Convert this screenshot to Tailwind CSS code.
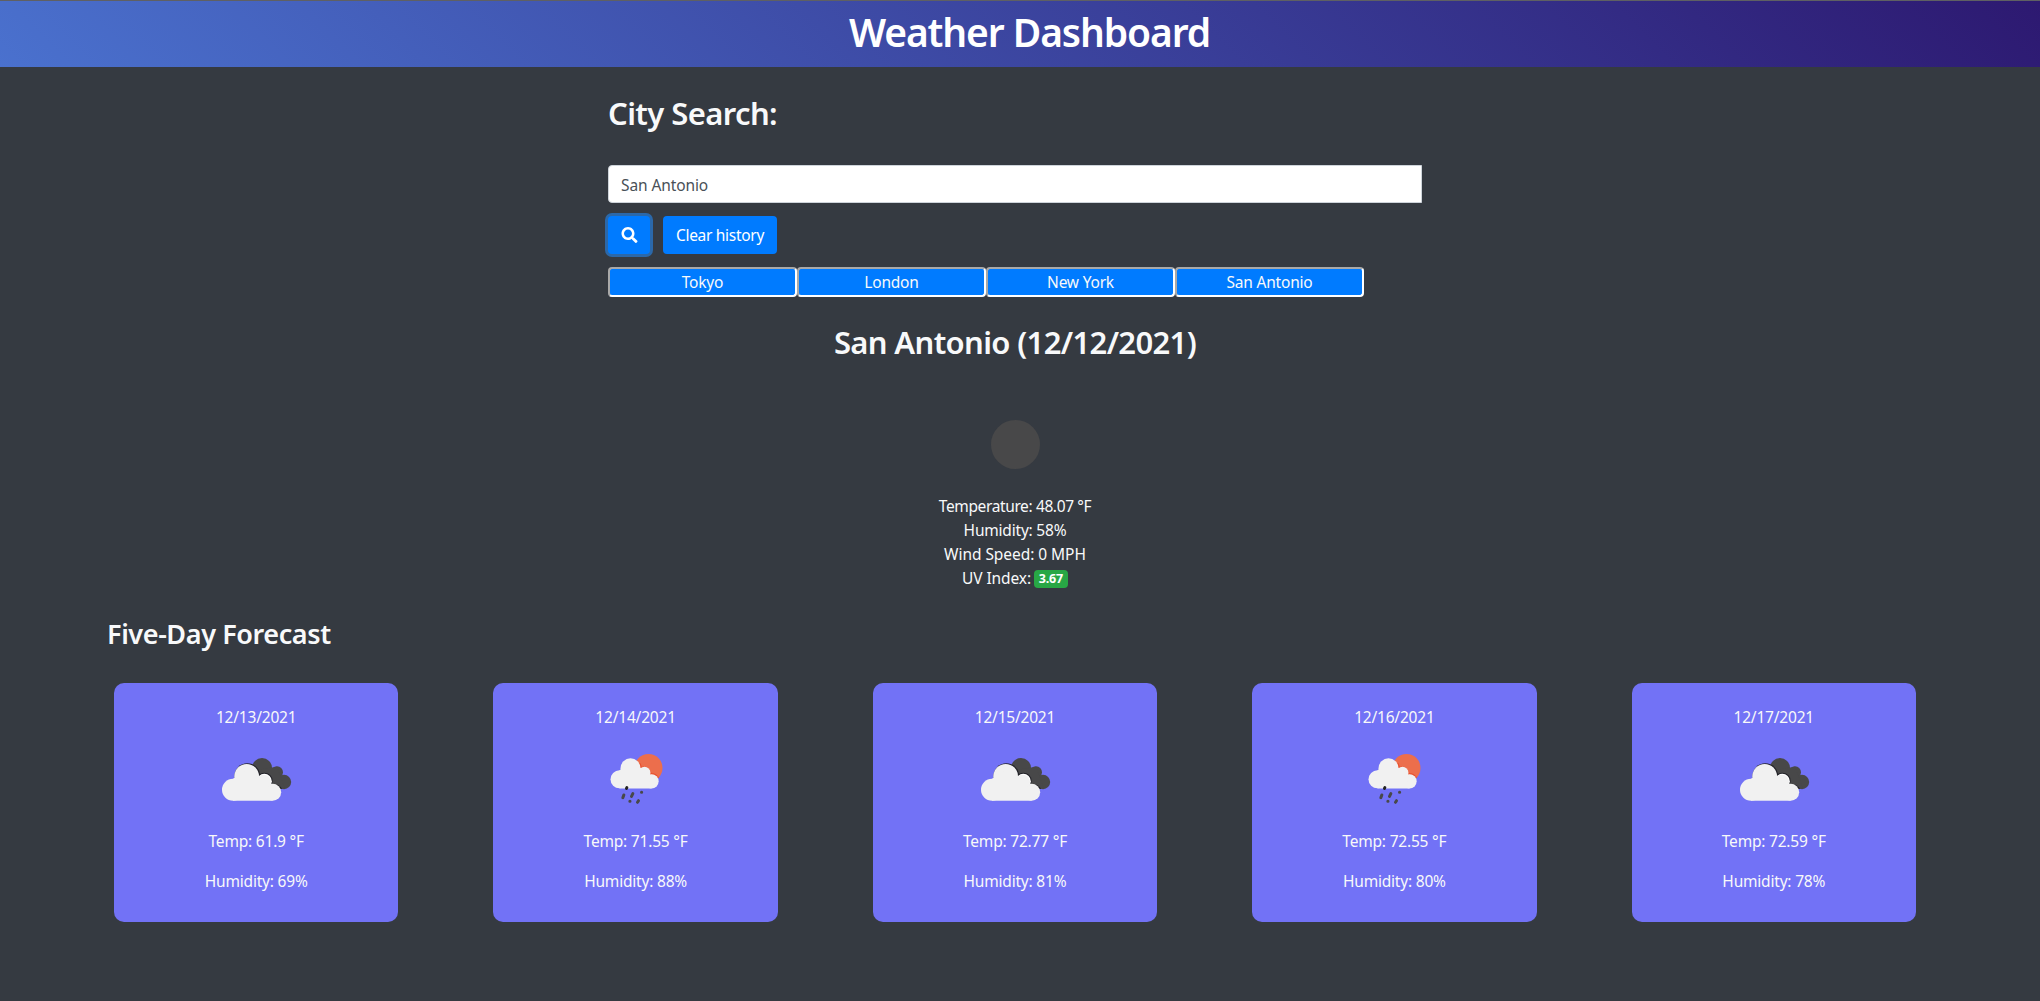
<!DOCTYPE html>
<html lang="en">
<head>
<meta charset="utf-8">
<title>Weather Dashboard</title>
<script src="https://cdn.jsdelivr.net/npm/@tailwindcss/browser@4"></script>
</head>
<body class="bg-[#353a41] text-[#f8f9fa] text-[15.5px] leading-6 min-h-[1001px] overflow-hidden font-['Noto_Sans',sans-serif]">
<svg class="hidden">
  <symbol id="clouds" viewBox="3 0 330 240">
    <g fill="#484849"><circle cx="186" cy="84" r="30"/><circle cx="231" cy="97" r="18"/><circle cx="252" cy="126" r="21.500"/><path d="M170 90L231 80L255 146H235L180 130Z"/></g>
    <g fill="#222228"><circle cx="142" cy="108" r="38.500"/><circle cx="193" cy="123" r="25"/><path d="M200 132H222Q240 134 246 147H210Z"/></g>
    <g fill="#fff"><circle cx="193" cy="124" r="22.500"/></g>
    <g fill="#f1f1f1"><circle cx="140" cy="109" r="37"/><circle cx="99" cy="149" r="33"/><circle cx="218" cy="157" r="25.500"/><circle cx="191" cy="126" r="22"/><path d="M99 116L140 90L200 120L218 182.500H99Z"/></g>
  </symbol>
  <symbol id="rain" viewBox="-28.500 0 330 240">
    <circle cx="174" cy="84" r="42" fill="#ec6e4c"/>
    <path d="M148 70Q152 78 151 83Q172 76 182 101Q195 101 204 113" fill="none" stroke="#e8502e" stroke-width="4"/>
    <g fill="#f1f1f1"><circle cx="120" cy="85" r="30"/><circle cx="87" cy="118" r="27"/><circle cx="183" cy="124" r="21.500"/><circle cx="162" cy="98" r="18"/><path d="M87 91L120 70L168 92L183 145.500H87Z"/></g>
    <g stroke="#484849" stroke-width="9" stroke-linecap="round"><path d="M100 165L97 173M127 161L123 169M153 157L153.500 157M118 184L118.500 184M144 182L141 187"/><path stroke="#222" d="M109 143L108 145"/></g>
  </symbol>
</svg>
<header class="h-[67px] border-t border-[#5f6063] bg-[linear-gradient(45deg,#4a71ce,#2d1971)] flex justify-center pt-[7px] pl-[19px]">
  <h1 class="text-[39px] leading-[48px] font-[560] text-white tracking-[-1.1px] whitespace-nowrap">Weather Dashboard</h1>
</header>
<main>
  <section class="w-[814px] ml-[608px]">
    <h2 class="text-[31px] leading-[38px] font-[560] pt-[27px] tracking-[-0.6px]">City Search:</h2>
    <input value="San Antonio" class="mt-[33px] block w-full h-[38px] rounded-l bg-white border border-[#ced4da] px-3 pt-0.5 text-[#495057] tracking-[-0.1px]">
    <div class="flex gap-[13px] mt-[13px]">
      <button aria-label="Search" class="w-[42px] h-[38px] rounded bg-[#007bff] ring-3 ring-[#2b68a9] flex items-center justify-center">
        <svg class="w-[17px] h-4" viewBox="0 0 512 512" fill="#fff"><path d="M505 442.700L405.300 343c-4.500-4.500-10.600-7-17-7H372c27.600-35.300 44-79.700 44-128C416 93.100 322.900 0 208 0S0 93.100 0 208s93.100 208 208 208c48.300 0 92.700-16.400 128-44v16.300c0 6.400 2.500 12.500 7 17l99.700 99.700c9.400 9.400 24.600 9.400 33.900 0l28.300-28.300c9.400-9.400 9.400-24.600.1-34zM208 336c-70.700 0-128-57.200-128-128 0-70.700 57.200-128 128-128 70.700 0 128 57.200 128 128 0 70.700-57.200 128-128 128z"/></svg>
      </button>
      <button class="w-[114px] h-[38px] rounded bg-[#007bff] text-white whitespace-nowrap tracking-[-0.3px]">Clear history</button>
    </div>
    <div class="flex mt-[13px] tracking-[-0.2px]">
      <button class="w-[189px] h-[30px] rounded border-2 border-t-[#a9a9a9] border-l-[#a9a9a9] border-white bg-[#007bff] leading-[26px]">Tokyo</button>
      <button class="w-[189px] h-[30px] rounded border-2 border-t-[#a9a9a9] border-l-[#a9a9a9] border-white bg-[#007bff] leading-[26px]">London</button>
      <button class="w-[189px] h-[30px] rounded border-2 border-t-[#a9a9a9] border-l-[#a9a9a9] border-white bg-[#007bff] leading-[26px]">New York</button>
      <button class="w-[189px] h-[30px] rounded border-2 border-t-[#a9a9a9] border-l-[#a9a9a9] border-white bg-[#007bff] leading-[26px]">San Antonio</button>
    </div>
    <div class="flex flex-col items-center">
      <h2 class="text-[31px] leading-[38px] font-[560] mt-[26px] whitespace-nowrap tracking-[-0.65px]">San Antonio (12/12/2021)</h2>
      <div class="size-[49px] rounded-full bg-[#484849] mt-[59px] mb-[25px]"></div>
      <p class="tracking-[-0.38px]">Temperature: 48.07 °F</p>
      <p class="tracking-[-0.2px]">Humidity: 58%</p>
      <p class="tracking-[-0.05px]">Wind Speed: 0 MPH</p>
      <p class="flex items-center gap-[3px] tracking-[-0.1px]">UV Index: <span class="w-[34px] h-[18px] mt-0.5 rounded bg-[#28a745] text-white text-[12.5px] leading-[18px] font-bold text-center tracking-[-0.2px]">3.67</span></p>
    </div>
  </section>
  <section>
    <h3 class="text-[27px] leading-[34px] font-[560] ml-[107px] mt-[27px] tracking-[-0.4px]">Five-Day Forecast</h3>
    <div class="ml-[114px] mt-8 w-[1802px] flex justify-between text-center tracking-[-0.2px]">
      <article class="w-[284.4px] h-[239px] rounded-[10px] bg-[#7272f6] pt-[22px]"><p>12/13/2021</p><svg class="w-[110px] h-20 mx-auto mt-[11px] mb-[9px]"><use href="#clouds"/></svg><p class="mb-4">Temp: 61.9 °F</p><p>Humidity: 69%</p></article>
      <article class="w-[284.4px] h-[239px] rounded-[10px] bg-[#7272f6] pt-[22px]"><p>12/14/2021</p><svg class="w-[110px] h-20 mx-auto mt-[11px] mb-[9px]"><use href="#rain"/></svg><p class="mb-4">Temp: 71.55 °F</p><p>Humidity: 88%</p></article>
      <article class="w-[284.4px] h-[239px] rounded-[10px] bg-[#7272f6] pt-[22px]"><p>12/15/2021</p><svg class="w-[110px] h-20 mx-auto mt-[11px] mb-[9px]"><use href="#clouds"/></svg><p class="mb-4">Temp: 72.77 °F</p><p>Humidity: 81%</p></article>
      <article class="w-[284.4px] h-[239px] rounded-[10px] bg-[#7272f6] pt-[22px]"><p>12/16/2021</p><svg class="w-[110px] h-20 mx-auto mt-[11px] mb-[9px]"><use href="#rain"/></svg><p class="mb-4">Temp: 72.55 °F</p><p>Humidity: 80%</p></article>
      <article class="w-[284.4px] h-[239px] rounded-[10px] bg-[#7272f6] pt-[22px]"><p>12/17/2021</p><svg class="w-[110px] h-20 mx-auto mt-[11px] mb-[9px]"><use href="#clouds"/></svg><p class="mb-4">Temp: 72.59 °F</p><p>Humidity: 78%</p></article>
    </div>
  </section>
</main>
</body>
</html>
